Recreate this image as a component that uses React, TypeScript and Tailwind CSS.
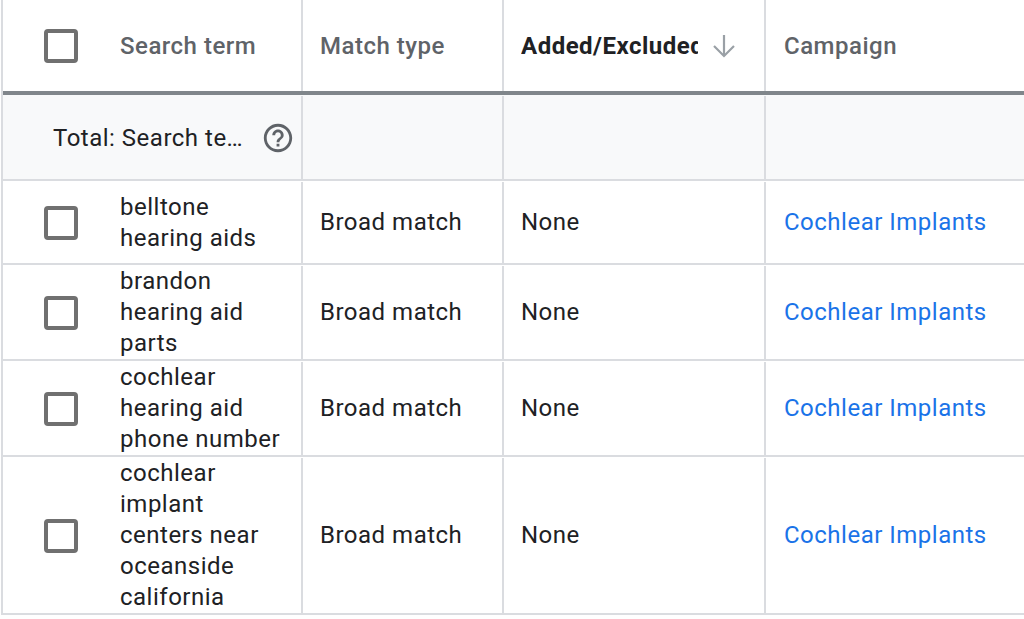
import React from "react";

const rows = [
  "belltone hearing aids",
  "brandon hearing aid parts",
  "cochlear hearing aid phone number",
  "cochlear implant centers near oceanside california",
];

function Checkbox() {
  return <div className="w-[34px] h-[34px] shrink-0 rounded-[4px] border-[4px] border-[#707070] bg-white" />;
}

function HelpIcon() {
  return (
    <svg width="34" height="34" viewBox="0 0 24 24" fill="#5f6368" className="shrink-0">
      <path d="M11 18h2v-2h-2v2zm1-16C6.48 2 2 6.48 2 12s4.48 10 10 10 10-4.48 10-10S17.52 2 12 2zm0 18c-4.41 0-8-3.59-8-8s3.59-8 8-8 8 3.59 8 8-3.59 8-8 8zm0-14c-2.21 0-4 1.790-4 4h2c0-1.1.9-2 2-2s2 .9 2 2c0 2-3 1.75-3 5h2c0-2.25 3-2.5 3-5 0-2.210-1.790-4-4-4z" />
    </svg>
  );
}

function ArrowDown() {
  return (
    <svg width="24" height="24" viewBox="0 0 24 24" fill="none" stroke="#9aa0a6" strokeWidth="2.2" className="shrink-0">
      <path d="M12 1v21" />
      <path d="M2 12l10 10 10-10" />
    </svg>
  );
}

export default function App() {
  return (
    <div className="w-[1024px] h-[619px] overflow-hidden bg-white font-['Roboto',sans-serif] text-[24px] tracking-[0.5px] text-[#202124]">
      <div className="ml-px w-[1100px] border-l-2 border-[#dadce0]">
        {/* header */}
        <div className="flex h-[95px] border-b-4 border-[#80868b]">
          <div className="flex w-[300px] shrink-0 items-center gap-[42px] border-r-2 border-[#dadce0] pl-[41px]">
            <Checkbox />
            <span className="font-medium text-[#5f6368]">Search term</span>
          </div>
          <div className="flex w-[201px] shrink-0 items-center border-r-2 border-[#dadce0] pl-[17px]">
            <span className="font-medium text-[#5f6368]">Match type</span>
          </div>
          <div className="flex w-[262px] shrink-0 items-center border-r-2 border-[#dadce0] pl-[17px]">
            <span className="w-[177px] overflow-hidden whitespace-nowrap font-bold text-[#202124]">Added/Excluded</span>
            <span className="ml-[14px]"><ArrowDown /></span>
          </div>
          <div className="flex w-[300px] shrink-0 items-center pl-[18px]">
            <span className="font-medium text-[#5f6368]">Campaign</span>
          </div>
        </div>
        {/* total */}
        <div className="flex h-[86px] border-b-2 border-[#dadce0] bg-[#f8f9fa] pt-px">
          <div className="flex w-[300px] shrink-0 items-center border-r-2 border-[#dadce0] pl-[50px]">
            <span className="w-[192px] overflow-hidden text-ellipsis whitespace-nowrap">Total: Search terms</span>
            <span className="ml-[16px]"><HelpIcon /></span>
          </div>
          <div className="w-[201px] shrink-0 border-r-2 border-[#dadce0]" />
          <div className="w-[262px] shrink-0 border-r-2 border-[#dadce0]" />
          <div className="w-[300px] shrink-0" />
        </div>
        {rows.map((t) => (
          <div key={t} className="flex min-h-[84px] border-b-2 border-[#dadce0] leading-[31px] pt-px">
            <div className="flex w-[300px] shrink-0 items-center gap-[42px] border-r-2 border-[#dadce0] pl-[41px]">
              <Checkbox />
              <span className="w-[166px]">{t}</span>
            </div>
            <div className="flex w-[201px] shrink-0 items-center border-r-2 border-[#dadce0] pl-[17px]">
              Broad match
            </div>
            <div className="flex w-[262px] shrink-0 items-center border-r-2 border-[#dadce0] pl-[17px]">
              None
            </div>
            <div className="flex w-[300px] shrink-0 items-center pl-[18px] text-[#1a73e8]">
              Cochlear Implants
            </div>
          </div>
        ))}
      </div>
    </div>
  );
}
